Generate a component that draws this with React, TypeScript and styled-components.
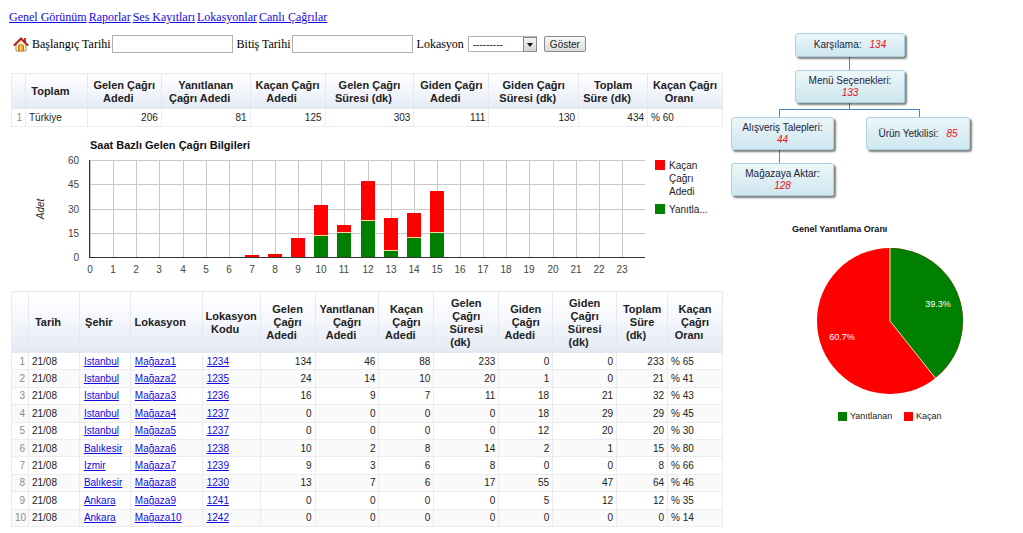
import React from "react";
import styled, { createGlobalStyle } from "styled-components";

const SANS = '"Liberation Sans", Arial, sans-serif';
const SERIF = '"Liberation Serif", "Times New Roman", serif';
const RED = "#ff0000";
const GREEN = "#008000";

const GlobalStyle = createGlobalStyle`
  *, *::before, *::after { box-sizing: border-box; }
  body { margin: 0; background: #fff; color: #000; font: 12px/16px ${SERIF}; }
`;

const Page = styled.div`
  display: grid;
  grid-template-columns: minmax(0, 714fr) minmax(0, 283fr);
  column-gap: 8px;
  padding: 0 9px;
`;

const Main = styled.main`
  display: flex;
  flex-direction: column;
  padding-top: 9px;
`;

const Aside = styled.aside`
  display: flex;
  flex-direction: column;
  align-items: flex-start;
  padding-top: 33px;
`;

const Nav = styled.nav`
  display: flex;
  gap: 2px;
  white-space: nowrap;
`;

const Link = styled.a`
  color: #1408e6;
  text-decoration: underline;
`;

const Filters = styled.form`
  display: flex;
  align-items: center;
  height: 18px;
  margin: 10px 0 20px;
  padding-left: 4px;
  white-space: nowrap;
`;

const HomeLink = styled.a`
  display: flex;
  margin-right: 3px;
`;

const Field = styled.label<{ $gap: number }>`
  display: flex;
  align-items: center;
  gap: ${(p) => p.$gap}px;
  margin-right: 4px;
`;

const DateInput = styled.input`
  width: 121px;
  height: 18px;
  padding: 1px 3px;
  border: 1px solid #b0b0b0;
  background: #fff;
  font: 10px ${SANS};
`;

const SelectBox = styled.span`
  position: relative;
  display: flex;
`;

const Select = styled.select`
  width: 69px;
  height: 16px;
  padding: 0 16px 0 4px;
  border: 1px solid #b0b0b0;
  border-radius: 0;
  background: #fff;
  appearance: none;
  color: #222;
  font: 10px ${SANS};
`;

const SelectArrow = styled.span`
  position: absolute;
  top: 1px;
  right: 0;
  bottom: 0;
  display: flex;
  align-items: center;
  justify-content: center;
  width: 14px;
  border: 1px solid #8a8a8a;
  background: linear-gradient(#f4f4f4, #d4d4d4);
  pointer-events: none;
`;

const Submit = styled.button`
  width: 42px;
  height: 16px;
  margin-left: 3px;
  padding: 1px 0 0;
  border: 1px solid #8c8c8c;
  border-radius: 2px;
  background: linear-gradient(#f8f8f8, #dcdcdc);
  color: #222;
  font: 10px/13px ${SANS};
`;

const DataTable = styled.table<{ $height: number }>`
  width: calc(100% - 2px);
  height: ${(p) => p.$height}px;
  margin-left: 2px;
  border-collapse: separate;
  border-spacing: 0;
  border: solid #e9e9ee;
  border-width: 1px 0 0 1px;
  table-layout: fixed;
  font: 10px/13px ${SANS};
  color: #222;
`;

const Col = styled.col<{ $share: number }>`
  width: ${(p) => p.$share}%;
`;

const HeadRow = styled.tr<{ $height: number }>`
  height: ${(p) => p.$height}px;
`;

const HeadCell = styled.th`
  padding: 0;
  border-right: 1px solid #e6e8ee;
  background: linear-gradient(#ffffff, #f6f8fc 40%, #e3e9f4);
  font-size: 11px;
  font-weight: bold;
  white-space: nowrap;
`;

const SortSlot = styled.span`
  display: inline-block;
  width: 12px;
`;

const BodyRow = styled.tr`
  &:nth-child(even) {
    background: #fafafa;
  }
`;

const Cell = styled.td<{ $align?: "left" | "right"; $muted?: boolean }>`
  padding: 0 3px;
  border: solid #ececf0;
  border-width: 0 1px 1px 0;
  color: ${(p) => (p.$muted ? "#8a8a8a" : "inherit")};
  text-align: ${(p) => p.$align ?? "left"};
  white-space: nowrap;
`;

const CellLink = styled(Link)`
  margin-left: 1px;
`;

const BarSvg = styled.svg`
  display: block;
  width: calc(100% - 2px);
  margin-left: 2px;
  font-family: ${SANS};
`;

const Tree = styled.div`
  position: relative;
  width: 240px;
  height: 163px;
`;

const TreeLines = styled.svg`
  position: absolute;
  inset: 0;
`;

const Node = styled.div<{ $x: number; $y: number; $w: number; $h: number }>`
  position: absolute;
  left: ${(p) => p.$x}px;
  top: ${(p) => p.$y}px;
  width: ${(p) => p.$w}px;
  height: ${(p) => p.$h}px;
  display: flex;
  flex-wrap: wrap;
  align-content: center;
  justify-content: center;
  column-gap: 8px;
  padding: 0 5px;
  border: 1px solid #a9d3de;
  border-radius: 3px;
  background: linear-gradient(#edf7fa, #cde7ee);
  box-shadow: 2px 2px 2px rgba(0, 0, 0, 0.5);
  color: #222238;
  font: 10px/12px ${SANS};
  white-space: nowrap;
`;

const Count = styled.em`
  color: #f01020;
`;

const PieSvg = styled.svg`
  display: block;
  margin-top: 22px;
  font-family: ${SANS};
`;

type Column = { width: number; title: string[] };

const summaryColumns: Column[] = [
  { width: 14, title: [] },
  { width: 62, title: ["Toplam"] },
  { width: 74, title: ["Gelen Çağrı", "Adedi"] },
  { width: 89, title: ["Yanıtlanan", "Çağrı Adedi"] },
  { width: 75, title: ["Kaçan Çağrı", "Adedi"] },
  { width: 89, title: ["Gelen Çağrı", "Süresi (dk)"] },
  { width: 75, title: ["Giden Çağrı", "Adedi"] },
  { width: 90, title: ["Giden Çağrı", "Süresi (dk)"] },
  { width: 69, title: ["Toplam", "Süre (dk)"] },
  { width: 75, title: ["Kaçan Çağrı", "Oranı"] },
];

const detailColumns: Column[] = [
  { width: 17, title: [] },
  { width: 51, title: ["Tarih"] },
  { width: 51, title: ["Şehir"] },
  { width: 72, title: ["Lokasyon"] },
  { width: 58, title: ["Lokasyon", "Kodu"] },
  { width: 55, title: ["Gelen", "Çağrı", "Adedi"] },
  { width: 64, title: ["Yanıtlanan", "Çağrı", "Adedi"] },
  { width: 55, title: ["Kaçan", "Çağrı", "Adedi"] },
  { width: 65, title: ["Gelen", "Çağrı", "Süresi", "(dk)"] },
  { width: 54, title: ["Giden", "Çağrı", "Adedi"] },
  { width: 64, title: ["Giden", "Çağrı", "Süresi", "(dk)"] },
  { width: 51, title: ["Toplam", "Süre", "(dk)"] },
  { width: 55, title: ["Kaçan", "Çağrı", "Oranı"] },
];

const details: [string, string, string, number[], number][] = [
  ["Istanbul", "Mağaza1", "1234", [134, 46, 88, 233, 0, 0, 233], 65],
  ["Istanbul", "Mağaza2", "1235", [24, 14, 10, 20, 1, 0, 21], 41],
  ["Istanbul", "Mağaza3", "1236", [16, 9, 7, 11, 18, 21, 32], 43],
  ["Istanbul", "Mağaza4", "1237", [0, 0, 0, 0, 18, 29, 29], 45],
  ["Istanbul", "Mağaza5", "1237", [0, 0, 0, 0, 12, 20, 20], 30],
  ["Balıkesir", "Mağaza6", "1238", [10, 2, 8, 14, 2, 1, 15], 80],
  ["Izmir", "Mağaza7", "1239", [9, 3, 6, 8, 0, 0, 8], 66],
  ["Balıkesir", "Mağaza8", "1230", [13, 7, 6, 17, 55, 47, 64], 46],
  ["Ankara", "Mağaza9", "1241", [0, 0, 0, 0, 5, 12, 12], 35],
  ["Ankara", "Mağaza10", "1242", [0, 0, 0, 0, 0, 0, 0], 14],
];

function Columns({ columns }: { columns: Column[] }) {
  const total = columns.reduce((sum, c) => sum + c.width, 0);
  return (
    <colgroup>
      {columns.map((c, i) => (
        <Col key={i} $share={(c.width / total) * 100} />
      ))}
    </colgroup>
  );
}

function Head({ columns, height }: { columns: Column[]; height: number }) {
  return (
    <thead>
      <HeadRow $height={height}>
        {columns.map((c, i) => (
          <HeadCell key={i} scope="col">
            {c.title.map((line, n) => (
              <React.Fragment key={n}>
                {n > 0 && <br />}
                {line}
              </React.Fragment>
            ))}
            {c.title.length > 0 && <SortSlot />}
          </HeadCell>
        ))}
      </HeadRow>
    </thead>
  );
}

function HomeIcon() {
  return (
    <svg width="16" height="16" viewBox="0 0 16 16" aria-hidden="true">
      <path d="M11 2h2v5h-2z" fill="#c0392b" />
      <path d="M3 8.500V15h10V8.500L8 3.500z" fill="#fdf3dc" stroke="#b58a5a" strokeWidth="1" />
      <path d="M5.500 15V9.500q2.500-2 5 0V15z" fill="#f2a32c" stroke="#c9781f" strokeWidth="1" />
      <path d="M8 9v6" stroke="#fbd47c" strokeWidth="1" />
      <path d="M1.500 9L8 2.500 14.500 9" fill="none" stroke="#b3201c" strokeWidth="2" strokeLinecap="round" />
    </svg>
  );
}

const bars: { hour: number; answered: number; missed: number }[] = [
  { hour: 7, answered: 0, missed: 1 },
  { hour: 8, answered: 0, missed: 2 },
  { hour: 9, answered: 0, missed: 12 },
  { hour: 10, answered: 13, missed: 19 },
  { hour: 11, answered: 15, missed: 5 },
  { hour: 12, answered: 22, missed: 25 },
  { hour: 13, answered: 4, missed: 20 },
  { hour: 14, answered: 12, missed: 15 },
  { hour: 15, answered: 15, missed: 26 },
];

const hours = Array.from({ length: 24 }, (_, i) => i);
const plot = { left: 79, right: 634, top: 33, bottom: 130 };
const xAt = (hour: number) => Math.round(plot.left + (hour * (plot.right - plot.left)) / 24);
const yAt = (value: number) =>
  Math.round(plot.bottom - (value * (plot.bottom - plot.top)) / 60);

function HourlyChart() {
  return (
    <BarSvg viewBox="0 0 712 164" role="img" aria-label="Saat Bazlı Gelen Çağrı Bilgileri">
      <text x="79" y="22" fontSize="11" fontWeight="bold" fill="#111">
        Saat Bazlı Gelen Çağrı Bilgileri
      </text>
      <g fill="#c8c8c8">
        {hours.map((h) => (
          <rect key={h} x={xAt(h)} y={plot.top} width="1" height={plot.bottom - plot.top} />
        ))}
        {[15, 30, 45, 60].map((v) => (
          <rect key={v} x={plot.left} y={yAt(v)} width={plot.right - plot.left} height="1" />
        ))}
      </g>
      {bars.map((b) => {
        const top = yAt(b.answered + b.missed);
        const split = yAt(b.answered);
        return (
          <g key={b.hour}>
            <rect x={xAt(b.hour) - 7} y={top} width="14" height={split - top} fill={RED} />
            {b.answered > 0 && (
              <>
                <rect x={xAt(b.hour) - 7} y={split} width="14" height={plot.bottom - split} fill={GREEN} />
                <rect x={xAt(b.hour) - 7} y={split - 1} width="14" height="1" fill="#f0d8a8" />
              </>
            )}
          </g>
        );
      })}
      <rect x={plot.left - 1} y={plot.top} width="1" height={plot.bottom - plot.top} fill="#333" />
      <rect x={plot.left - 1} y={plot.bottom} width={plot.right - plot.left + 1} height="1" fill="#333" />
      <g fontSize="10" fill="#444">
        {[0, 15, 30, 45, 60].map((v) => (
          <text key={v} x="68" y={yAt(v) + 4} textAnchor="end">
            {v}
          </text>
        ))}
        {hours.map((h) => (
          <text key={h} x={xAt(h)} y="146" textAnchor="middle">
            {h}
          </text>
        ))}
      </g>
      <text transform="translate(33 82) rotate(-90)" fontSize="10" fontStyle="italic" fill="#222" textAnchor="middle">
        Adet
      </text>
      <rect x="644" y="33" width="10" height="10" fill={RED} />
      <rect x="644" y="77" width="10" height="10" fill={GREEN} />
      <g fontSize="10" fill="#222">
        <text x="658" y="42">Kaçan</text>
        <text x="658" y="55">Çağrı</text>
        <text x="658" y="68">Adedi</text>
        <text x="658" y="86">Yanıtla...</text>
      </g>
    </BarSvg>
  );
}

function AnswerPie() {
  const cx = 159;
  const cy = 103;
  const r = 73;
  const angle = 0.393 * 2 * Math.PI;
  const ex = cx + r * Math.sin(angle);
  const ey = cy - r * Math.cos(angle);
  return (
    <PieSvg width="240" height="210" viewBox="0 0 240 210" role="img" aria-label="Genel Yanıtlama Oranı">
      <text x="61" y="14" fontSize="9" fontWeight="bold" fill="#111">
        Genel Yanıtlama Oranı
      </text>
      <circle cx={cx} cy={cy} r={r} fill={RED} />
      <path d={`M${cx} ${cy}V${cy - r}A${r} ${r} 0 0 1 ${ex} ${ey}Z`} fill={GREEN} />
      <path d={`M${cx} ${cy - r}V${cy}L${ex} ${ey}`} fill="none" stroke="#f7e3c0" strokeWidth="1" />
      <g fontSize="9" fill="#fff" textAnchor="middle">
        <text x="207" y="89">39.3%</text>
        <text x="111" y="122">60.7%</text>
      </g>
      <rect x="107" y="194" width="9" height="9" fill={GREEN} />
      <rect x="173" y="194" width="9" height="9" fill={RED} />
      <g fontSize="9" fill="#222">
        <text x="119" y="201">Yanıtlanan</text>
        <text x="185" y="201">Kaçan</text>
      </g>
    </PieSvg>
  );
}

const nodes = [
  { label: "Karşılama:", count: 134, x: 64, y: 0, w: 110, h: 24 },
  { label: "Menü Seçenekleri:", count: 133, x: 64, y: 37, w: 110, h: 33 },
  { label: "Alışveriş Talepleri:", count: 44, x: 0, y: 84, w: 103, h: 33 },
  { label: "Ürün Yetkilisi:", count: 85, x: 135, y: 84, w: 104, h: 33 },
  { label: "Mağazaya Aktar:", count: 128, x: 0, y: 130, w: 103, h: 33 },
];

export default function App() {
  return (
    <>
      <GlobalStyle />
      <Page>
        <Main>
          <Nav>
            {["Genel Görünüm", "Raporlar", "Ses Kayıtları", "Lokasyonlar", "Canlı Çağrılar"].map((t) => (
              <Link key={t} href="#">
                {t}
              </Link>
            ))}
          </Nav>
          <Filters onSubmit={(e) => e.preventDefault()}>
            <HomeLink href="#" aria-label="Ana sayfa">
              <HomeIcon />
            </HomeLink>
            <Field $gap={1}>
              Başlangıç Tarihi
              <DateInput type="text" name="start" />
            </Field>
            <Field $gap={1}>
              Bitiş Tarihi
              <DateInput type="text" name="end" />
            </Field>
            <Field $gap={4}>
              Lokasyon
              <SelectBox>
                <Select name="location" defaultValue="">
                  <option value="">---------</option>
                </Select>
                <SelectArrow>
                  <svg width="6" height="4" viewBox="0 0 6 4" aria-hidden="true">
                    <path d="M0 0h6L3 4z" fill="#111" />
                  </svg>
                </SelectArrow>
              </SelectBox>
            </Field>
            <Submit type="submit">Göster</Submit>
          </Filters>

          <DataTable $height={54}>
            <Columns columns={summaryColumns} />
            <Head columns={summaryColumns} height={35} />
            <tbody>
              <BodyRow>
                <Cell $align="right" $muted>1</Cell>
                <Cell>Türkiye</Cell>
                {[206, 81, 125, 303, 111, 130, 434].map((n, i) => (
                  <Cell key={i} $align="right">{n}</Cell>
                ))}
                <Cell>% 60</Cell>
              </BodyRow>
            </tbody>
          </DataTable>

          <HourlyChart />

          <DataTable $height={236}>
            <Columns columns={detailColumns} />
            <Head columns={detailColumns} height={61} />
            <tbody>
              {details.map(([city, store, code, numbers, ratio], i) => (
                <BodyRow key={i}>
                  <Cell $align="right" $muted>{i + 1}</Cell>
                  <Cell>21/08</Cell>
                  <Cell><CellLink href="#">{city}</CellLink></Cell>
                  <Cell><CellLink href="#">{store}</CellLink></Cell>
                  <Cell><CellLink href="#">{code}</CellLink></Cell>
                  {numbers.map((n, k) => (
                    <Cell key={k} $align="right">{n}</Cell>
                  ))}
                  <Cell>% {ratio}</Cell>
                </BodyRow>
              ))}
            </tbody>
          </DataTable>
        </Main>

        <Aside>
          <Tree>
            <TreeLines width="240" height="163" viewBox="0 0 240 163" aria-hidden="true">
              <g fill="#4a86cc">
                <rect x="118" y="24" width="1" height="53" />
                <rect x="48" y="76" width="141" height="1" />
                <rect x="48" y="76" width="1" height="55" />
                <rect x="188" y="76" width="1" height="8" />
              </g>
            </TreeLines>
            {nodes.map((n) => (
              <Node key={n.label} $x={n.x} $y={n.y} $w={n.w} $h={n.h}>
                <span>{n.label}</span>
                <Count>{n.count}</Count>
              </Node>
            ))}
          </Tree>
          <AnswerPie />
        </Aside>
      </Page>
    </>
  );
}
